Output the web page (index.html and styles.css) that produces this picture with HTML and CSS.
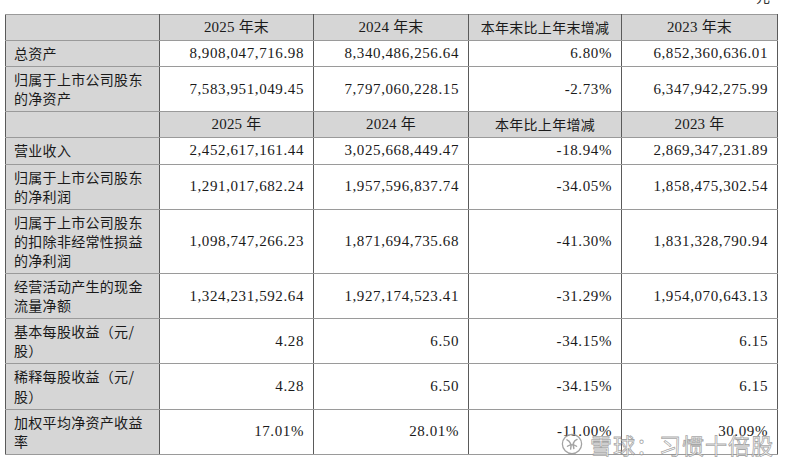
FILE: index.html
```html
<!DOCTYPE html>
<html lang="zh-CN">
<head>
<meta charset="utf-8">
<link rel="stylesheet" href="styles.css">
</head>
<body>
<div class="page">
  <div class="unit">元</div>
  <table class="fin">
    <colgroup>
      <col class="c1"><col class="c2"><col class="c3"><col class="c4"><col class="c5">
    </colgroup>
    <tr class="head">
      <td class="label"></td>
      <td>2025 年末</td>
      <td>2024 年末</td>
      <td class="cjk">本年末比上年末增减</td>
      <td>2023 年末</td>
    </tr>
    <tr>
      <td class="label">总资产</td>
      <td class="num">8,908,047,716.98</td>
      <td class="num">8,340,486,256.64</td>
      <td class="num">6.80%</td>
      <td class="num">6,852,360,636.01</td>
    </tr>
    <tr>
      <td class="label">归属于上市公司股东的净资产</td>
      <td class="num">7,583,951,049.45</td>
      <td class="num">7,797,060,228.15</td>
      <td class="num">-2.73%</td>
      <td class="num">6,347,942,275.99</td>
    </tr>
    <tr class="head">
      <td class="label"></td>
      <td>2025 年</td>
      <td>2024 年</td>
      <td class="cjk">本年比上年增减</td>
      <td>2023 年</td>
    </tr>
    <tr>
      <td class="label">营业收入</td>
      <td class="num">2,452,617,161.44</td>
      <td class="num">3,025,668,449.47</td>
      <td class="num">-18.94%</td>
      <td class="num">2,869,347,231.89</td>
    </tr>
    <tr>
      <td class="label">归属于上市公司股东的净利润</td>
      <td class="num">1,291,017,682.24</td>
      <td class="num">1,957,596,837.74</td>
      <td class="num">-34.05%</td>
      <td class="num">1,858,475,302.54</td>
    </tr>
    <tr>
      <td class="label">归属于上市公司股东的扣除非经常性损益的净利润</td>
      <td class="num">1,098,747,266.23</td>
      <td class="num">1,871,694,735.68</td>
      <td class="num">-41.30%</td>
      <td class="num">1,831,328,790.94</td>
    </tr>
    <tr>
      <td class="label">经营活动产生的现金流量净额</td>
      <td class="num">1,324,231,592.64</td>
      <td class="num">1,927,174,523.41</td>
      <td class="num">-31.29%</td>
      <td class="num">1,954,070,643.13</td>
    </tr>
    <tr>
      <td class="label">基本每股收益（元/股）</td>
      <td class="num">4.28</td>
      <td class="num">6.50</td>
      <td class="num">-34.15%</td>
      <td class="num">6.15</td>
    </tr>
    <tr>
      <td class="label">稀释每股收益（元/股）</td>
      <td class="num">4.28</td>
      <td class="num">6.50</td>
      <td class="num">-34.15%</td>
      <td class="num">6.15</td>
    </tr>
    <tr>
      <td class="label">加权平均净资产收益率</td>
      <td class="num">17.01%</td>
      <td class="num">28.01%</td>
      <td class="num">-11.00%</td>
      <td class="num">30.09%</td>
    </tr>
  </table>
  <div class="watermark">
    <svg class="wm-logo" viewBox="0 0 24 24" width="22" height="22">
      <circle cx="12" cy="12" r="10.5" fill="none" stroke="#9a9a9a" stroke-width="1.4"/>
      <path d="M6.5 7.5 C10 9 12 13 10.5 17.5" fill="none" stroke="#9a9a9a" stroke-width="1.6" stroke-linecap="round"/>
      <path d="M17.5 7 C14 8.5 12.5 12 14 17" fill="none" stroke="#9a9a9a" stroke-width="1.6" stroke-linecap="round"/>
      <path d="M7 14.5 C10 12.5 14 12.5 17 14.5" fill="none" stroke="#9a9a9a" stroke-width="1.4" stroke-linecap="round"/>
    </svg>
    <span class="wm-text">雪球：习惯十倍股</span>
  </div>
</div>
</body>
</html>
```

FILE: styles.css
```css
html, body {
  margin: 0;
  padding: 0;
  background: #ffffff;
}

.page {
  position: relative;
  width: 800px;
  height: 471px;
  overflow: hidden;
  font-family: "Liberation Serif", "Noto Sans CJK SC", serif;
  color: #1a1a1a;
}

.unit {
  height: 14px;
  line-height: 14px;
  margin-top: -11px;
  padding-right: 30px;
  text-align: right;
  font-size: 14px;
  font-family: "Noto Sans CJK SC", sans-serif;
  color: #333;
}

.fin {
  margin: 11px 0 0 5px;
  width: 772px;
  table-layout: fixed;
  border-collapse: collapse;
  font-size: 15px;
}

.c1 { width: 154px; }
.c2 { width: 154px; }
.c3 { width: 155px; }
.c4 { width: 153px; }
.c5 { width: 156px; }

.fin td {
  border-top: 1px solid #9a9a9a;
  border-bottom: 1px solid #9a9a9a;
  border-left: 1px solid #5a5a5a;
  border-right: 1px solid #5a5a5a;
  padding: 3px 8px 3px 8px;
  line-height: 19.1px;
  vertical-align: middle;
}

.fin .head td {
  background: #d6d6d6;
  text-align: center;
  font-size: 15px;
  letter-spacing: 0.2px;
}

.fin .head td.cjk {
  font-family: "Noto Sans CJK SC", sans-serif;
  font-size: 14px;
  letter-spacing: 0.3px;
}

.fin td.label {
  background: #d6d6d6;
  font-family: "Noto Sans CJK SC", sans-serif;
  font-size: 14px;
  letter-spacing: 0.3px;
  text-align: left;
  padding-left: 8px;
  padding-right: 6px;
}

.fin td.num {
  text-align: right;
  letter-spacing: 0.6px;
  padding-right: 9px;
}

.watermark {
  position: absolute;
  left: 561px;
  top: 431px;
  display: flex;
  align-items: center;
  gap: 7px;
  opacity: 0.9;
}

.wm-logo {
  display: block;
}

.wm-text {
  font-family: "Noto Sans CJK SC", sans-serif;
  font-size: 22px;
  line-height: 26px;
  letter-spacing: 1px;
  color: rgba(255, 255, 255, 0.85);
  -webkit-text-stroke: 0.8px rgba(140, 140, 140, 0.85);
}
```
